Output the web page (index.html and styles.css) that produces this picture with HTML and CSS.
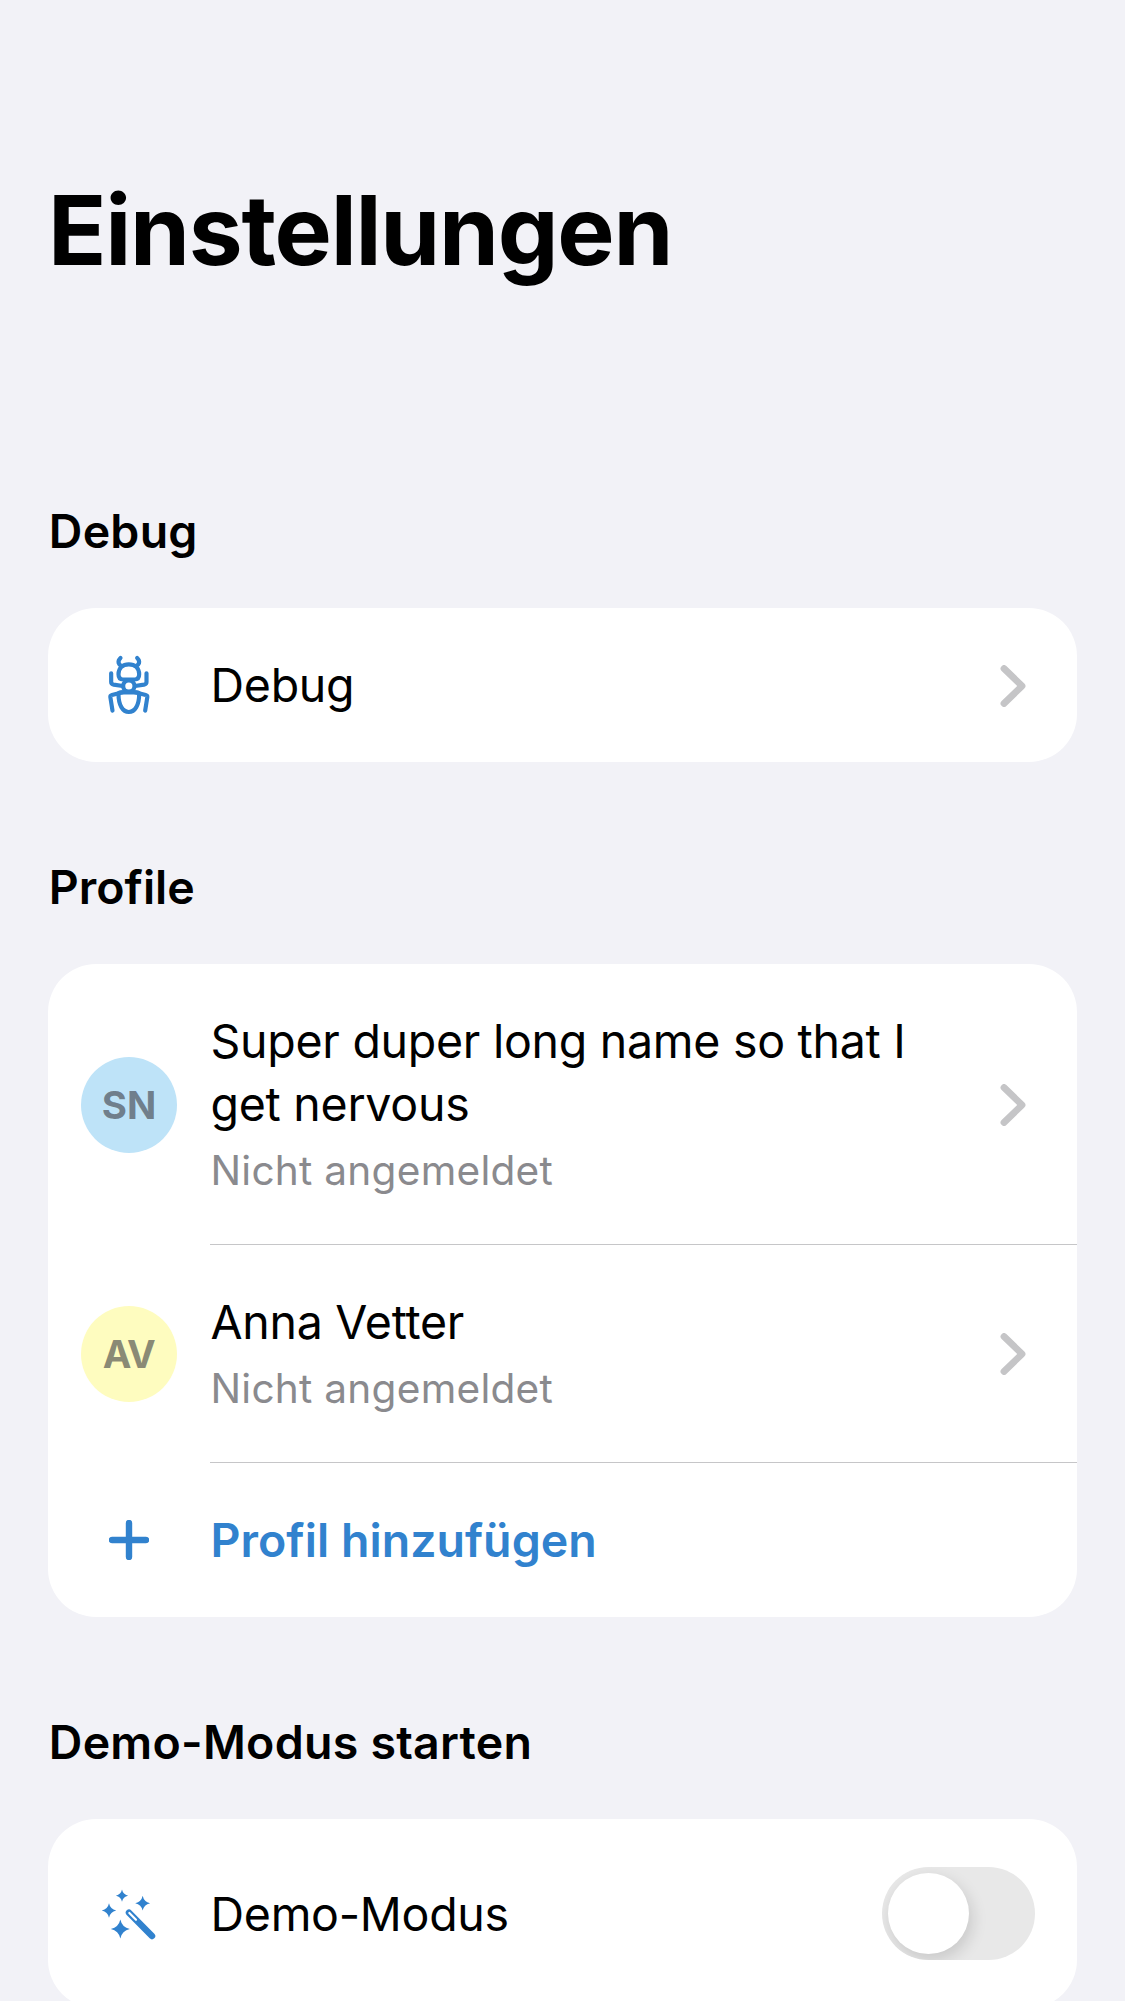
FILE: index.html
```html
<!DOCTYPE html>
<html lang="de">
<head>
<meta charset="utf-8">
<title>Einstellungen</title>
<link rel="stylesheet" href="styles.css">
</head>
<body>
<main class="screen">
  <h1 class="title">Einstellungen</h1>

  <section class="section">
    <h2 class="heading">Debug</h2>
    <div class="card">
      <div class="row">
        <div class="lead">
          <svg class="icon" viewBox="27 45 180 180" aria-hidden="true">
            <g class="ant">
              <path d="M85.500 103C85.500 85 98 73 116.500 73S147.500 85 147.500 103C147.500 113 142 118.500 134 118.500H99C91 118.500 85.500 113 85.500 103Z"/>
              <circle cx="116.500" cy="138" r="17"/>
              <path d="M85.500 163C85.500 195 98 216 116.500 216S147.500 195 147.500 163C147.500 158.500 144 157 139 157H94C89 157 85.500 158.500 85.500 163Z"/>
              <path d="M91.500 54Q84 61 86 69Q88 75 94 78M141.500 54Q149 61 147 69Q145 75 139 78"/>
              <path d="M63.500 100V126Q63.500 132.500 71 134L98 138M169.500 100V126Q169.500 132.500 162 134L135 138"/>
              <path d="M67.500 212L61 171Q60.500 166.500 66 165L98 157M165.500 212L172 171Q172.500 166.500 167 165L135 157"/>
            </g>
          </svg>
        </div>
        <div class="body">
          <div class="label">Debug</div>
          <svg class="chevron" viewBox="0 0 26 42" aria-hidden="true"><path d="M4 3.500L22 21L4 38.500"/></svg>
        </div>
      </div>
    </div>
  </section>

  <section class="section">
    <h2 class="heading heading-short">Profile</h2>
    <div class="card">
      <div class="row">
        <div class="lead"><div class="avatar avatar-blue">SN</div></div>
        <div class="body body-profile">
          <div class="text">
            <div class="label">Super duper long name so that I get nervous</div>
            <div class="status">Nicht angemeldet</div>
          </div>
          <svg class="chevron" viewBox="0 0 26 42" aria-hidden="true"><path d="M4 3.500L22 21L4 38.500"/></svg>
        </div>
      </div>
      <div class="row">
        <div class="lead"><div class="avatar avatar-yellow">AV</div></div>
        <div class="body body-profile">
          <div class="text">
            <div class="label">Anna Vetter</div>
            <div class="status">Nicht angemeldet</div>
          </div>
          <svg class="chevron" viewBox="0 0 26 42" aria-hidden="true"><path d="M4 3.500L22 21L4 38.500"/></svg>
        </div>
      </div>
      <div class="row">
        <div class="lead">
          <svg class="plus" viewBox="0 0 40 40" aria-hidden="true"><path d="M20 3V37M3 20H37"/></svg>
        </div>
        <div class="body"><div class="label label-action">Profil hinzufügen</div></div>
      </div>
    </div>
  </section>

  <section class="section">
    <h2 class="heading">Demo-Modus starten</h2>
    <div class="card">
      <div class="row row-switch">
        <div class="lead">
          <svg class="icon wand" viewBox="27 42 180 180" aria-hidden="true">
            <defs><path id="spark" d="M0 -28.500Q5 -5 28.500 0Q5 5 0 28.500Q-5 5 -28.500 0Q-5 -5 0 -28.500Z"/></defs>
            <use href="#spark" transform="translate(96 77) scale(.64)"/>
            <use href="#spark" transform="translate(158 99.500) scale(.78)"/>
            <use href="#spark" transform="translate(57 121.500) scale(.76)"/>
            <use href="#spark" transform="translate(91 177)"/>
            <path class="stick" d="M117 128L186 198"/>
            <path class="tip" d="M118 129L138 149.500"/>
          </svg>
        </div>
        <div class="body">
          <div class="label">Demo-Modus</div>
          <div class="switch"><div class="knob"></div></div>
        </div>
      </div>
    </div>
  </section>
</main>
</body>
</html>
```
FILE: styles.css
```css
* { box-sizing: border-box; }

body {
  margin: 0;
  background: #f2f2f7;
  color: #000;
  font-family: Inter, "Liberation Sans", sans-serif;
}

.screen {
  height: 2001px;
  padding: 169px 48px 0;
  overflow: hidden;
}

.title {
  margin: 0 0 209px;
  font-size: 96.3px;
  line-height: 122px;
  font-weight: 700;
  letter-spacing: -1.25px;
}

.section { margin-bottom: 94px; }

.heading {
  margin: 0 0 45px;
  padding-left: 0.8px;
  font-size: 46.5px;
  line-height: 63px;
  font-weight: 600;
  letter-spacing: 0.25px;
}

.heading-short { letter-spacing: 0; }

.card {
  background: #fff;
  border-radius: 48px;
  overflow: hidden;
}

.row {
  display: flex;
  min-height: 154px;
}

.row-switch { min-height: 189px; }

.lead {
  flex: 0 0 162px;
  display: flex;
  align-items: center;
  justify-content: center;
}

.body {
  flex: 1;
  display: flex;
  align-items: center;
  justify-content: space-between;
  padding: 1px 51px 0 0.5px;
}

.row-switch .body {
  padding-top: 0;
  padding-right: 42px;
}

.row-switch .label { padding-top: 1px; }

.body-profile { border-bottom: 1px solid #c6c6c8; }

.text {
  max-width: 740px;
  padding: 45px 0 46px;
}

.label {
  font-size: 46.5px;
  line-height: 63px;
  letter-spacing: -0.27px;
}

.label-action {
  color: #3182ce;
  font-weight: 600;
  letter-spacing: 0.04px;
}

.status {
  margin-top: 8px;
  color: #8a8a8e;
  font-size: 40.6px;
  line-height: 54px;
  letter-spacing: 0.26px;
}

.avatar {
  width: 96px;
  height: 96px;
  border-radius: 50%;
  color: rgba(60, 60, 67, 0.6);
  font-size: 38.5px;
  line-height: 96px;
  font-weight: 700;
  text-align: center;
}

.avatar-blue { background: #bee3f8; }

.avatar-yellow {
  background: #fefcbf;
  padding-right: 1px;
  letter-spacing: -1.5px;
}

.icon {
  width: 60px;
  height: 60px;
}

.ant {
  fill: none;
  stroke: #3182ce;
  stroke-width: 12.5;
  stroke-linecap: round;
  stroke-linejoin: round;
}

.wand { fill: #3182ce; }

.stick {
  stroke: #3182ce;
  stroke-width: 19.5;
  stroke-linecap: round;
}

.tip {
  stroke: #fff;
  stroke-width: 6.5;
  stroke-linecap: round;
}

.plus {
  width: 40px;
  height: 40px;
  fill: none;
  stroke: #3182ce;
  stroke-width: 6.4;
  stroke-linecap: round;
}

.chevron {
  width: 26px;
  height: 42px;
  fill: none;
  stroke: #c5c5c7;
  stroke-width: 6.8;
  stroke-linecap: round;
  stroke-linejoin: round;
}

.switch {
  width: 153px;
  height: 93px;
  padding: 6px;
  border-radius: 47px;
  background: #e8e8e8;
  overflow: hidden;
}

.knob {
  width: 81px;
  height: 81px;
  border-radius: 50%;
  background: #fff;
  box-shadow: 3px 6px 16px rgba(0, 0, 0, 0.14);
}
```
